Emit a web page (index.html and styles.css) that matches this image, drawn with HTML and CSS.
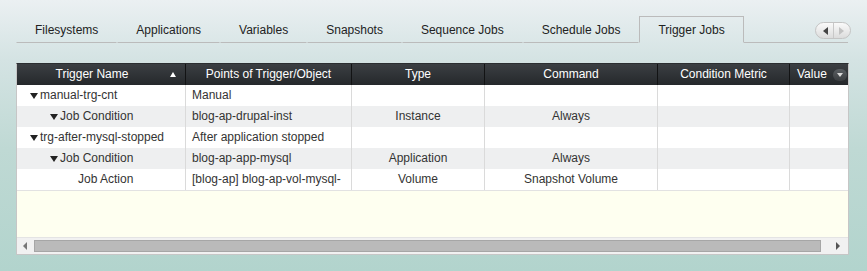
FILE: index.html
```html
<!DOCTYPE html>
<html lang="en">
<head>
    <meta charset="UTF-8">
    <title>Trigger Jobs</title>
    <link rel="stylesheet" href="styles.css">
</head>
<body>
    <div class="tabbar">
        <div class="tab">Filesystems</div>
        <div class="tab">Applications</div>
        <div class="tab">Variables</div>
        <div class="tab">Snapshots</div>
        <div class="tab">Sequence Jobs</div>
        <div class="tab">Schedule Jobs</div>
        <div class="tab active">Trigger Jobs</div>
        <div class="tab-fill">
            <div class="scroller">
                <span class="scroll-btn"><i class="arr-left"></i></span>
                <span class="scroll-btn"><i class="arr-right dim"></i></span>
            </div>
        </div>
    </div>

    <div class="grid">
        <div class="grid-head row">
            <div class="cell c1 sorted">Trigger Name<i class="sort-up"></i></div>
            <div class="cell c2">Points of Trigger/Object</div>
            <div class="cell c3">Type</div>
            <div class="cell c4">Command</div>
            <div class="cell c5">Condition Metric</div>
            <div class="cell c6 menu-col">Value<span class="col-menu"><i></i></span></div>
        </div>
        <div class="grid-body">
            <div class="row">
                <div class="cell c1 lvl0"><i class="twisty"></i>manual-trg-cnt</div>
                <div class="cell c2 left">Manual</div>
                <div class="cell c3"></div>
                <div class="cell c4"></div>
                <div class="cell c5"></div>
                <div class="cell c6"></div>
            </div>
            <div class="row alt">
                <div class="cell c1 lvl1"><i class="twisty"></i>Job Condition</div>
                <div class="cell c2 left">blog-ap-drupal-inst</div>
                <div class="cell c3">Instance</div>
                <div class="cell c4">Always</div>
                <div class="cell c5"></div>
                <div class="cell c6"></div>
            </div>
            <div class="row">
                <div class="cell c1 lvl0"><i class="twisty"></i>trg-after-mysql-stopped</div>
                <div class="cell c2 left">After application stopped</div>
                <div class="cell c3"></div>
                <div class="cell c4"></div>
                <div class="cell c5"></div>
                <div class="cell c6"></div>
            </div>
            <div class="row alt">
                <div class="cell c1 lvl1"><i class="twisty"></i>Job Condition</div>
                <div class="cell c2 left">blog-ap-app-mysql</div>
                <div class="cell c3">Application</div>
                <div class="cell c4">Always</div>
                <div class="cell c5"></div>
                <div class="cell c6"></div>
            </div>
            <div class="row last">
                <div class="cell c1 lvl2">Job Action</div>
                <div class="cell c2 left">[blog-ap] blog-ap-vol-mysql-</div>
                <div class="cell c3">Volume</div>
                <div class="cell c4">Snapshot Volume</div>
                <div class="cell c5"></div>
                <div class="cell c6"></div>
            </div>
            <div class="empty"></div>
        </div>
        <div class="hscroll">
            <i class="arr-left small"></i>
            <div class="thumb"></div>
            <i class="arr-right small"></i>
        </div>
    </div>
</body>
</html>
```

FILE: styles.css
```css
html, body {
    height: 100%;
}
body {
    margin: 0;
    font-family: "Liberation Sans", Arial, sans-serif;
    font-size: 12px;
    color: #333;
    background: linear-gradient(to bottom, #ebf0f2 0%, #d4e3e3 22%, #bfd9d4 55%, #b2d4cd 100%);
    overflow: hidden;
}

/* tab strip */
.tabbar {
    display: flex;
    margin: 16px 19px 0 16px;
    height: 27px;
}
.tab {
    box-sizing: border-box;
    height: 27px;
    padding: 1px 18px 0;
    line-height: 24px;
    color: #222;
    border: 1px solid transparent;
    border-bottom-color: #bbbbbb;
    white-space: nowrap;
}
.tab.active {
    border-color: #bbbbbb;
    border-bottom-color: transparent;
}
.tab-fill {
    flex: 1;
    border-bottom: 1px solid #bbbbbb;
    display: flex;
    justify-content: flex-end;
}
.scroller {
    display: flex;
    margin: 6px -3px 0 0;
    height: 15px;
    width: 34px;
    border: 1px solid #c4c4c4;
    border-radius: 9px;
    background: linear-gradient(#fafafa, #dcdcdc);
    overflow: hidden;
}
.scroll-btn {
    flex: 1;
    display: flex;
    align-items: center;
    justify-content: center;
}
.scroll-btn + .scroll-btn {
    border-left: 1px solid #c8c8c8;
}
.arr-left, .arr-right {
    display: block;
    width: 0;
    height: 0;
    border-top: 4px solid transparent;
    border-bottom: 4px solid transparent;
}
.arr-left {
    border-right: 5px solid #444;
    margin-left: 3px;
}
.arr-right {
    border-left: 5px solid #444;
    margin-right: 1px;
}
.arr-right.dim {
    border-left-color: #c2c2c2;
}

/* grid */
.grid {
    margin: 20px 18px 0 16px;
    border: 1px solid #c6c6c6;
    border-top-color: #2b2e31;
    background: #fefff0;
}
.row {
    display: flex;
    height: 21px;
}
.cell {
    box-sizing: border-box;
    height: 100%;
    line-height: 21px;
    text-align: center;
    white-space: nowrap;
    overflow: hidden;
    border-right: 1px solid #dadada;
}
.c1 { width: 169px; }
.c2 { width: 166px; }
.c3 { width: 133px; }
.c4 { width: 173px; }
.c5 { width: 132px; }
.c6 { width: 58px; border-right: none; }

.grid-head {
    background: linear-gradient(#3b3f43, #25282b);
    color: #fff;
}
.grid-head .cell {
    border-right-color: #121314;
    position: relative;
}
.grid-head .sorted {
    padding-right: 18px;
}
.sort-up {
    position: absolute;
    right: 9px;
    top: 8px;
    width: 0;
    height: 0;
    border-left: 3px solid transparent;
    border-right: 3px solid transparent;
    border-bottom: 5px solid #fff;
}
.grid-head .menu-col {
    text-align: left;
    padding-left: 7px;
}
.col-menu {
    position: absolute;
    right: 1px;
    top: 5px;
    width: 14px;
    height: 12px;
    border-radius: 6px;
    background: linear-gradient(#5a5e62, #3a3d40);
    display: flex;
    align-items: center;
    justify-content: center;
}
.col-menu i {
    display: block;
    width: 0;
    height: 0;
    border-left: 3px solid transparent;
    border-right: 3px solid transparent;
    border-top: 4px solid #d8d8d8;
}

.grid-body .row {
    background: #fff;
}
.grid-body .row.alt {
    background: #eeeff0;
}
.grid-body .row.last {
    border-bottom: 1px solid #e2e2e2;
}
.left {
    text-align: left;
    padding-left: 6px;
}
.lvl0, .lvl1, .lvl2 {
    text-align: left;
    display: flex;
    align-items: center;
}
.lvl0 { padding-left: 13px; }
.lvl1 { padding-left: 33px; }
.lvl2 { padding-left: 61px; }
.twisty {
    display: block;
    width: 0;
    height: 0;
    margin: 1px 2px 0 0;
    border-left: 4px solid transparent;
    border-right: 4px solid transparent;
    border-top: 6px solid #222;
}
.empty {
    height: 46px;
}

/* horizontal scrollbar */
.hscroll {
    display: flex;
    align-items: center;
    height: 16px;
    border-top: 1px solid #e4e4e4;
    background: #f1f1f1;
}
.arr-left.small {
    border-right-color: #777;
    border-right-width: 4px;
    margin: 0 0 0 6px;
}
.thumb {
    flex: 1;
    height: 12px;
    margin: 0 9px 0 7px;
    background: #bababa;
    border: 1px solid #a6a6a6;
    box-sizing: border-box;
}
.arr-right.small {
    border-left-color: #555;
    border-left-width: 4px;
    margin: 0 8px 0 6px;
}
```
